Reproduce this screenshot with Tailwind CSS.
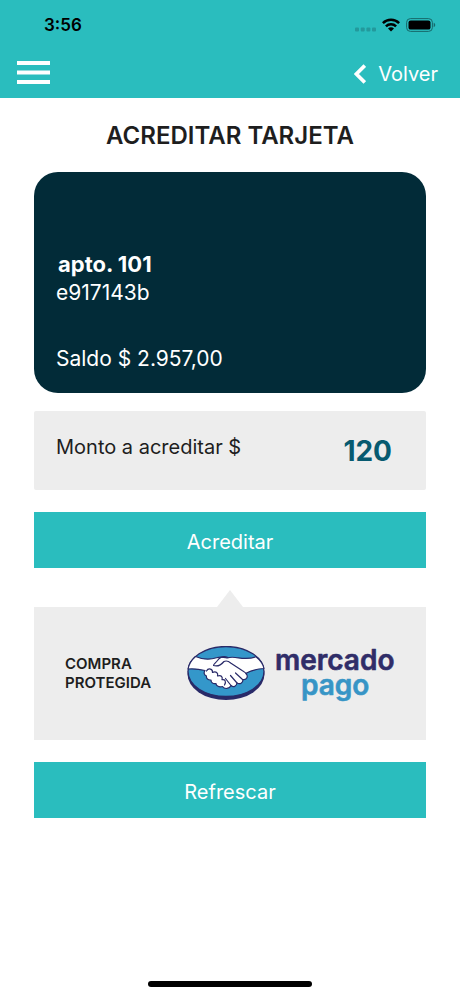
<!DOCTYPE html>
<html lang="es">
<head>
<meta charset="utf-8">
<meta name="viewport" content="width=device-width, initial-scale=1">
<title>Acreditar tarjeta</title>
<script src="https://cdn.jsdelivr.net/npm/@tailwindcss/browser@4"></script>
</head>
<body class="flex min-h-screen flex-col bg-white font-['Inter','Liberation_Sans',sans-serif] text-[#1e1e1e]">
<header class="bg-[#2abdbe]">
  <div class="flex h-[50px] items-center justify-between pr-6 pl-11">
    <span class="pt-0.5 text-[17px] font-semibold text-black">3:56</span>
    <div class="flex items-center gap-1.5">
      <svg class="h-3.5 w-[21px]" viewBox="0 0 21 14" fill="#23999c" aria-hidden="true"><rect y="9.500" width="4" height="4" rx="1"/><rect x="5.7" y="9.500" width="4" height="4" rx="1"/><rect x="11.4" y="9.500" width="4" height="4" rx="1"/><rect x="17" y="9.500" width="4" height="4" rx="1"/></svg>
      <svg class="h-3.5 w-[18px]" viewBox="0 0 18 14" aria-hidden="true"><g fill="none" stroke="#000" stroke-width="2.5"><path d="M.9 5.2a11.5 11.5 0 0 1 16.2 0"/><path d="M3.9 8.4a7.2 7.2 0 0 1 10.2 0"/></g><path d="M6 10.5a4.2 4.2 0 0 1 6 0L9 13.6z"/></svg>
      <svg class="h-3.5 w-[30px]" viewBox="0 0 30 14" aria-hidden="true"><rect x=".6" y=".6" width="25.8" height="12.8" rx="3.8" fill="none" stroke="#17696b" stroke-width="1"/><rect x="2.5" y="2.4" width="22" height="9.2" rx="2.2"/><path d="M27.7 4.8c2 .7 2 3.7 0 4.4z" fill="#17696b"/></svg>
    </div>
  </div>
  <nav class="flex h-12 items-start justify-between pr-[22px] pl-[17px]">
    <button type="button" aria-label="Menú" class="flex h-11 items-center"><svg class="h-[23px] w-[33px]" viewBox="0 0 33 23" fill="#fff" aria-hidden="true"><rect width="33" height="4"/><rect y="9.5" width="33" height="4"/><rect y="19" width="33" height="4"/></svg></button>
    <a href="#" class="flex h-[47px] items-center gap-3 text-[20px] text-white"><svg class="h-5 w-3" viewBox="0 0 12 20" fill="none" stroke="#fff" stroke-width="3.6" aria-hidden="true"><path d="M10.8 1.6 2.4 10l8.4 8.4"/></svg>Volver</a>
  </nav>
</header>
<main class="flex flex-1 flex-col px-[34px]">
  <h1 class="pt-5 text-center text-[24px] leading-9 font-semibold">ACREDITAR TARJETA</h1>
  <section class="mt-[18px] rounded-3xl bg-[#022b38] px-[22px] pt-[78px] pb-5 text-[21px] leading-7 text-white">
    <h2 class="pl-0.5 text-[22px] font-bold">apto. 101</h2>
    <p class="pt-px">e917143b</p>
    <p class="mt-[38px]">Saldo $ 2.957,00</p>
  </section>
  <form class="mt-[18px] flex flex-col gap-[22px]">
    <div class="flex justify-between rounded-xs bg-[#ededed] px-[22px] pt-5 pb-[19px]">
      <label for="monto" class="text-[20px] leading-8">Monto a acreditar $</label>
      <input id="monto" type="text" inputmode="numeric" value="120" class="mr-3 h-10 w-28 bg-transparent text-right text-[28px] font-bold text-[#075a70] outline-none">
    </div>
    <button type="submit" class="h-14 bg-[#2abdbe] pt-1 text-[20px] text-white">Acreditar</button>
  </form>
  <svg class="mt-[22px] h-[17px] w-[26px] self-center" viewBox="0 0 26 17" fill="#ededed" aria-hidden="true"><path d="M13 0 26 17H0z"/></svg>
  <section class="flex h-[133px] items-center justify-between bg-[#ededed] pr-[25px] pb-0.5 pl-[31px]">
    <p class="text-[15px] leading-[19px] font-semibold">COMPRA<br>PROTEGIDA</p>
    <div class="flex items-center gap-2.5">
      <svg class="h-[54px] w-[78px]" viewBox="0 0 78 54" aria-hidden="true">
        <ellipse cx="39" cy="28" rx="38.5" ry="26" fill="#292a68"/>
        <ellipse cx="39" cy="25.5" rx="38" ry="25" fill="#3497ca" stroke="#292a68" stroke-width="1.3"/>
        <path d="M8.500 10.500c8 3.500 14 3.500 21 1.300 4-1.300 8-.3 11 0 9-2.500 15 3.500 28.500-1C73 14 76 18 77 22.500c-7 .3-13 2-18 4.800 2.500 3 1 6.500-3 6.300 0 3.500-3 5-6 3.400-.5 3.500-3.500 4.600-6 2.500-1.500 3.500-6.500 4-8.500 1-3.500 1-6.500-.5-6.500-3-3.200.5-5-1-5-3.500-3 .2-5-1.500-4.500-4-2.500-1-3-3.500-1.500-5.500C12 23 7 22.500 1 23c1-5 3.500-9 7.500-12.500z" fill="#fff" stroke="#292a68" stroke-width="1.2" stroke-linejoin="round"/>
        <path d="M41 11.500c-4.500-2-8-.5-10.500 3-1.500 2.200-4 3.500-4 5 4.500 1.500 8-1 10.500-4 3-1.500 5 0 7 1.800l11.500 7.500c2 1.200 3.500 2 4 3.500M48.500 27l7 6.500M43.500 29.500l6.500 7.500M38.500 32.500l5.500 7M19.500 25c2-3.500 6.500-2 6 1.500 3.500-1.700 6 .5 5 3.500 3.500-1.400 5.500.7 4.500 3.700 3-.6 4.500 1.500 2.500 5.300" fill="none" stroke="#292a68" stroke-width="1.2" stroke-linecap="round" stroke-linejoin="round"/>
      </svg>
      <svg class="h-[70px] w-[126px]" viewBox="0 0 126 70" role="img" aria-label="mercado pago" font-family="Inter, sans-serif" font-weight="600" font-size="28" stroke-linejoin="round" stroke-width=".6">
        <text><tspan x="0" y="32" fill="#302d68" stroke="#302d68">mercado</tspan><tspan x="26" y="57" fill="#3795c6" stroke="#3795c6">pago</tspan></text>
      </svg>
    </div>
  </section>
  <button type="button" class="mt-[22px] h-14 bg-[#2abdbe] pt-1 text-[20px] text-white">Refrescar</button>
</main>
<div class="mb-[9px] h-1.5 w-[164px] self-center rounded-full bg-black"></div>
</body>
</html>
